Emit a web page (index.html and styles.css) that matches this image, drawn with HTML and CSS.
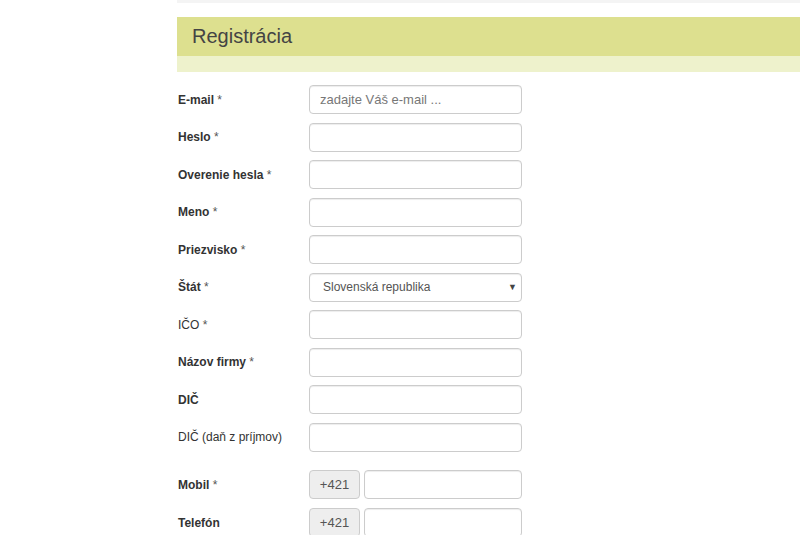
FILE: index.html
```html
<!DOCTYPE html>
<html lang="sk">
  <head>
    <meta charset="UTF-8" />
    <meta name="viewport" content="width=device-width, initial-scale=1.0" />
    <title>Registrácia</title>
    <link rel="stylesheet" href="styles.css">
  </head>
  <body>
    <div class="page">
      <div class="top-strip"></div>

      <header class="panel-head">
        <h1>Registrácia</h1>
        <div class="sub"></div>
      </header>

      <form class="reg-form">
        <div class="row">
          <label class="bold">E-mail <span class="req">*</span></label>
          <input type="text" placeholder="zadajte Váš e-mail ..." />
        </div>
        <div class="row">
          <label class="bold">Heslo <span class="req">*</span></label>
          <input type="password" />
        </div>
        <div class="row">
          <label class="bold">Overenie hesla <span class="req">*</span></label>
          <input type="password" />
        </div>
        <div class="row">
          <label class="bold">Meno <span class="req">*</span></label>
          <input type="text" />
        </div>
        <div class="row">
          <label class="bold">Priezvisko <span class="req">*</span></label>
          <input type="text" />
        </div>
        <div class="row">
          <label class="bold">Štát <span class="req">*</span></label>
          <div class="select">
            <span>Slovenská republika</span>
            <span class="caret">▼</span>
          </div>
        </div>
        <div class="row">
          <label>IČO <span class="req">*</span></label>
          <input type="text" />
        </div>
        <div class="row">
          <label class="bold">Názov firmy <span class="req">*</span></label>
          <input type="text" />
        </div>
        <div class="row">
          <label class="bold">DIČ</label>
          <input type="text" />
        </div>
        <div class="row">
          <label>DIČ (daň z príjmov)</label>
          <input type="text" />
        </div>

        <div class="phones">
          <div class="row">
            <label class="bold">Mobil <span class="req">*</span></label>
            <div class="phone">
              <span class="addon">+421</span>
              <input type="text" />
            </div>
          </div>
          <div class="row">
            <label class="bold">Telefón</label>
            <div class="phone">
              <span class="addon">+421</span>
              <input type="text" />
            </div>
          </div>
        </div>
      </form>
    </div>
  </body>
</html>
```

FILE: styles.css
```css
* {
  box-sizing: border-box;
  margin: 0;
  padding: 0;
}

html,
body {
  height: 100%;
  background-color: #ffffff;
  font-family: "Liberation Sans", Arial, sans-serif;
  color: #333333;
  overflow: hidden;
}

.page {
  padding-left: 177px;
}

.top-strip {
  height: 3px;
  background-color: #f4f4f4;
}

.panel-head {
  margin-top: 14px;
}

.panel-head h1 {
  height: 39px;
  background-color: #dde08f;
  font-size: 20px;
  font-weight: normal;
  color: #444444;
  padding-left: 15px;
  line-height: 39px;
}

.panel-head .sub {
  height: 16px;
  background-color: #eef2cc;
}

.reg-form {
  padding-top: 13px;
  display: flex;
  flex-direction: column;
  gap: 8.5px;
}

.row {
  display: flex;
  align-items: center;
  height: 29px;
}

.row label {
  width: 132px;
  font-size: 12px;
  padding-left: 1px;
  color: #333333;
}

.row label.bold {
  font-weight: bold;
}

.row label .req {
  font-weight: normal;
  color: #555555;
}

input,
.select {
  width: 213px;
  height: 29px;
  border: 1px solid #cccccc;
  border-radius: 4px;
  box-shadow: inset 0 1px 1px rgba(0, 0, 0, 0.075);
  font-family: "Liberation Sans", Arial, sans-serif;
  font-size: 13px;
  padding: 0 12px 0 10px;
  color: #555555;
  background-color: #ffffff;
}

input::placeholder {
  color: #777777;
}

.select {
  display: flex;
  align-items: center;
  justify-content: space-between;
  font-size: 12px;
  padding: 0 4px 0 13px;
}

.select .caret {
  font-size: 9px;
  color: #444444;
}

.phones {
  margin-top: 10px;
  display: flex;
  flex-direction: column;
  gap: 9px;
}

.phone {
  display: flex;
  gap: 4px;
  width: 213px;
}

.addon {
  width: 51px;
  height: 29px;
  background-color: #eeeeee;
  border: 1px solid #cccccc;
  border-radius: 4px;
  font-size: 13px;
  color: #555555;
  display: flex;
  align-items: center;
  justify-content: center;
}

.phone input {
  width: 158px;
}
```
